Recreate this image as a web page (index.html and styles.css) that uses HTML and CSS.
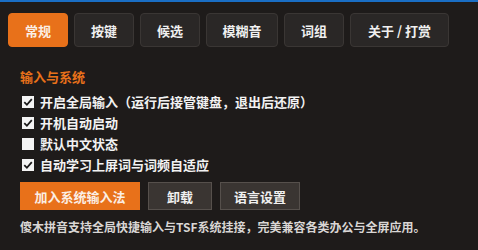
FILE: index.html
```html
<!DOCTYPE html>
<html lang="zh-CN">
<head>
<meta charset="utf-8">
<link rel="stylesheet" href="styles.css">
</head>
<body>
<div class="topbar"></div>
<nav class="tabs">
  <div class="tab active">常规</div>
  <div class="tab">按键</div>
  <div class="tab">候选</div>
  <div class="tab tab-wide">模糊音</div>
  <div class="tab">词组</div>
  <div class="tab tab-about">关于 / 打赏</div>
</nav>
<main class="content">
  <div class="section-title">输入与系统</div>
  <div class="row"><span class="box checked"><svg viewBox="0 0 12 12"><path d="M2.3 6.2 L4.9 8.8 L9.8 3.2" fill="none" stroke="#1b1a1a" stroke-width="1.8"/></svg></span><span>开启全局输入（运行后接管键盘，退出后还原）</span></div>
  <div class="row"><span class="box checked"><svg viewBox="0 0 12 12"><path d="M2.3 6.2 L4.9 8.8 L9.8 3.2" fill="none" stroke="#1b1a1a" stroke-width="1.8"/></svg></span><span>开机自动启动</span></div>
  <div class="row"><span class="box"></span><span>默认中文状态</span></div>
  <div class="row"><span class="box checked"><svg viewBox="0 0 12 12"><path d="M2.3 6.2 L4.9 8.8 L9.8 3.2" fill="none" stroke="#1b1a1a" stroke-width="1.8"/></svg></span><span>自动学习上屏词与词频自适应</span></div>
  <div class="buttons">
    <div class="btn primary btn-add">加入系统输入法</div>
    <div class="btn btn-uninstall">卸载</div>
    <div class="btn btn-lang">语言设置</div>
  </div>
  <p class="note">傻木拼音支持全局快捷输入与TSF系统挂接，完美兼容各类办公与全屏应用。</p>
</main>
</body>
</html>
```
FILE: styles.css
```css
html, body {
  margin: 0;
  padding: 0;
  background: #1e1b1a;
  width: 478px;
  height: 250px;
  overflow: hidden;
  font-family: "Noto Sans CJK SC", "Noto Sans", sans-serif;
  font-weight: 700;
  color: #f2f2f2;
}
.topbar {
  height: 2px;
  background: #1a6ec4;
}
.tabs {
  display: flex;
  gap: 6px;
  padding: 11px 0 0 8px;
}
.tab {
  box-sizing: border-box;
  width: 60px;
  height: 34px;
  display: flex;
  align-items: center;
  justify-content: center;
  background: #2a2726;
  border: 1px solid #3a3634;
  border-radius: 4px;
  font-size: 13px;
  color: #f0f0f0;
}
.tab-wide { width: 72px; }
.tab-about { width: 99px; }
.tab.active {
  background: #e8711a;
  border-color: #e8711a;
  color: #fbeee4;
}
.content {
  padding: 20px 0 0 20px;
}
.section-title {
  font-size: 13px;
  line-height: 20px;
  height: 20px;
  color: #e8711a;
  margin-bottom: 4px;
}
.row {
  display: flex;
  align-items: center;
  gap: 6px;
  height: 21px;
  padding-left: 2px;
  font-size: 13px;
  line-height: 21px;
  white-space: nowrap;
}
.box {
  width: 12px;
  height: 12px;
  background: #f4f4f4;
  display: block;
  flex: none;
}
.box svg {
  width: 12px;
  height: 12px;
  display: block;
}
.buttons {
  display: flex;
  gap: 8px;
  margin-top: 7px;
}
.btn {
  box-sizing: border-box;
  height: 28px;
  display: flex;
  align-items: center;
  justify-content: center;
  background: #3a3532;
  border: 1px solid #56504c;
  font-size: 13px;
  color: #f0f0f0;
}
.btn-add { width: 120px; }
.btn-uninstall { width: 64px; }
.btn-lang { width: 80px; }
.btn.primary {
  background: #e8711a;
  border-color: #e8711a;
  color: #fbeee4;
}
.note {
  margin: 8px 0 0 0;
  font-size: 12px;
  line-height: 18px;
  color: #d9d6d4;
  white-space: nowrap;
}
```
